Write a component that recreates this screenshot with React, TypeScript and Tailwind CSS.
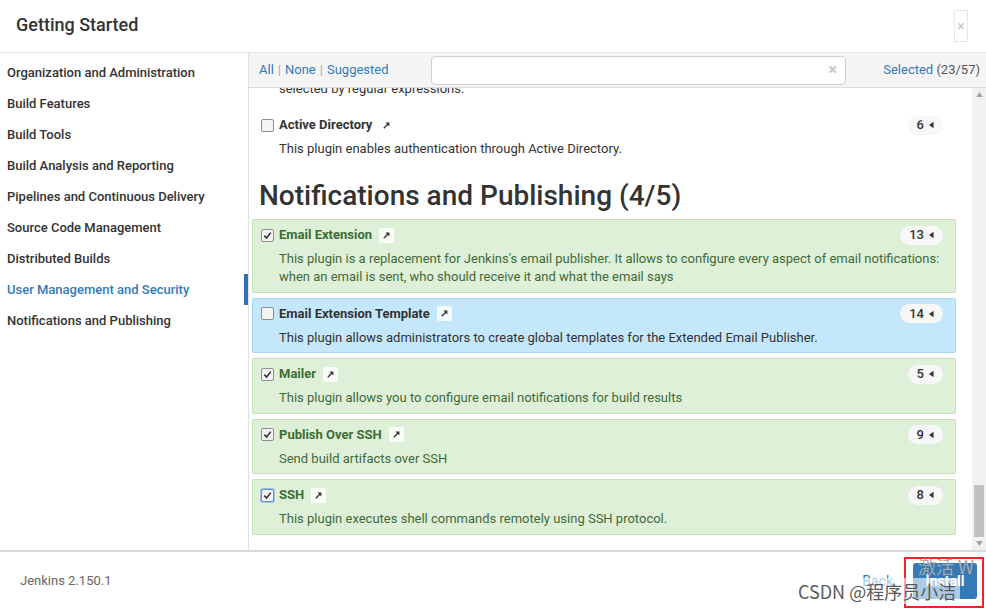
import React from 'react';

const categories = [
  'Organization and Administration',
  'Build Features',
  'Build Tools',
  'Build Analysis and Reporting',
  'Pipelines and Continuous Delivery',
  'Source Code Management',
  'Distributed Builds',
  'User Management and Security',
  'Notifications and Publishing',
];

type Plugin = { name: string; desc: string[]; deps: number; checked: boolean; tone: 'green' | 'blue' | 'none'; focus?: boolean };

const plugins: Plugin[] = [
  {
    name: 'Email Extension',
    desc: [
      "This plugin is a replacement for Jenkins's email publisher. It allows to configure every aspect of email notifications:",
      'when an email is sent, who should receive it and what the email says',
    ],
    deps: 13,
    checked: true,
    tone: 'green',
  },
  { name: 'Email Extension Template', desc: ['This plugin allows administrators to create global templates for the Extended Email Publisher.'], deps: 14, checked: false, tone: 'blue' },
  { name: 'Mailer', desc: ['This plugin allows you to configure email notifications for build results'], deps: 5, checked: true, tone: 'green' },
  { name: 'Publish Over SSH', desc: ['Send build artifacts over SSH'], deps: 9, checked: true, tone: 'green' },
  { name: 'SSH', desc: ['This plugin executes shell commands remotely using SSH protocol.'], deps: 8, checked: true, tone: 'green', focus: true },
];

function Checkbox({ checked, focus }: { checked: boolean; focus?: boolean }) {
  return (
    <span
      className={
        'w-[13px] h-[13px] rounded-[2px] border bg-[#f3f3f3] flex items-center justify-center shrink-0 ' +
        (focus ? 'border-[#5b8fd6] ring-1 ring-[#9fc0ec]' : 'border-[#8f8f8f]')
      }
    >
      {checked && (
        <svg viewBox="0 0 10 10" className="w-[9px] h-[9px]">
          <path d="M1.5 5.2 L4 7.8 L8.6 1.8" fill="none" stroke="#333" strokeWidth="1.8" />
        </svg>
      )}
    </span>
  );
}

function LinkIcon() {
  return (
    <span className="w-[15px] h-[15px] bg-white/80 rounded-[2px] flex items-center justify-center shrink-0">
      <svg viewBox="0 0 10 10" className="w-[9px] h-[9px]">
        <path d="M2 8 L7.5 2.5" stroke="#333" strokeWidth="1.5" />
        <path d="M3.8 1.8 H8.2 V6.2 Z" fill="#333" />
      </svg>
    </span>
  );
}

function DepBadge({ n }: { n: number }) {
  return (
    <span className="h-[19px] px-[9px] rounded-full bg-[#f7f7f7] flex items-center gap-[5px] text-[13px] text-[#333] font-medium">
      {n}
      <svg viewBox="0 0 6 8" className="w-[5px] h-[8px]">
        <path d="M5.5 0 V8 L0 4 Z" fill="#333" />
      </svg>
    </span>
  );
}

function PluginRow({ p }: { p: Plugin }) {
  const box =
    p.tone === 'green'
      ? 'bg-[#dff0d8] border-[#c5e2b6]'
      : p.tone === 'blue'
      ? 'bg-[#c4e7fb] border-[#a6d8f4]'
      : 'border-transparent';
  const title = p.tone === 'green' ? 'text-[#3b6e33]' : 'text-[#333]';
  const body = p.tone === 'green' ? 'text-[#3f6b3a]' : 'text-[#333]';
  return (
    <div className={'border rounded-[2px] pt-[6px] pb-[5.5px] pl-[8px] pr-[12px] ' + box}>
      <div className="h-[18px] flex items-center">
        <Checkbox checked={p.checked} focus={p.focus} />
        <span className={'ml-[5px] text-[13px] font-bold ' + title}>{p.name}</span>
        <span className="ml-[7px]">
          <LinkIcon />
        </span>
        <span className="ml-auto">
          <DepBadge n={p.deps} />
        </span>
      </div>
      <div className={'mt-[6px] pl-[18px] text-[13px] leading-[18px] ' + body}>
        {p.desc.map(d => (
          <div key={d}>{d}</div>
        ))}
      </div>
    </div>
  );
}

export default function App() {
  return (
    <div className="w-[986px] h-[610px] bg-white flex flex-col overflow-hidden relative font-['Roboto','Liberation_Sans',sans-serif] text-[#333]">
      {/* header */}
      <div className="h-[53px] shrink-0 border-b border-[#e3e3e3] flex items-center justify-between pl-[16px] pr-[18px] pb-[4px]">
        <h1 className="text-[18px] font-medium text-[#333]">Getting Started</h1>
        <button className="w-[14px] h-[32px] mt-[4px] border border-[#e6e6e6] text-[#c4c4c4] text-[14px] flex items-center justify-center">×</button>
      </div>

      <div className="flex flex-1 min-h-0">
        {/* sidebar */}
        <div className="w-[249px] shrink-0 border-r border-[#e0e0e0] pt-[4px]">
          {categories.map(c => {
            const active = c === 'User Management and Security';
            return (
              <div
                key={c}
                className={
                  'h-[31px] flex items-center pl-[7px] text-[13px] font-medium border-r-4 ' +
                  (active ? 'text-[#337ab7] border-[#2f73b3]' : 'text-[#333] border-transparent')
                }
              >
                {c}
              </div>
            );
          })}
        </div>

        {/* main */}
        <div className="flex-1 flex flex-col min-w-0">
          <div className="h-[35px] shrink-0 bg-[#f5f5f5] border-b border-[#dcdcdc] flex items-center pl-[10px] pr-[6px] text-[13px]">
            <div className="w-[172px] flex items-center gap-[4px] text-[#337ab7]">
              <span>All</span>
              <span className="text-[#aaa]">|</span>
              <span>None</span>
              <span className="text-[#aaa]">|</span>
              <span>Suggested</span>
            </div>
            <div className="w-[415px] h-[29px] bg-white border border-[#d0d0d0] rounded-[4px] flex items-center justify-end pr-[8px]">
              <span className="text-[#c8c8c8] text-[16px] font-bold">×</span>
            </div>
            <div className="ml-auto text-[#337ab7]">
              Selected <span className="text-[#555]">(23/57)</span>
            </div>
          </div>

          <div className="flex-1 flex min-h-0">
            <div className="flex-1 overflow-hidden pl-[3px] pr-[16px]">
              <div className="-mt-[8px] flex flex-col gap-[5px]">
                <div className="pl-[27px] pb-[6px] text-[13px] leading-[18px] text-[#333]">selected by regular expressions.</div>
                <PluginRow p={{ name: 'Active Directory', desc: ['This plugin enables authentication through Active Directory.'], deps: 6, checked: false, tone: 'none' }} />
                <h2 className="pl-[7px] mt-[9px] mb-[1.5px] text-[28px] leading-[34px] font-medium text-[#333]">Notifications and Publishing (4/5)</h2>
                {plugins.map(p => (
                  <PluginRow key={p.name} p={p} />
                ))}
              </div>
            </div>
            {/* scrollbar */}
            <div className="w-[14px] shrink-0 bg-[#f1f1f1] flex flex-col items-center">
              <svg viewBox="0 0 8 6" className="w-[7px] h-[5px] mt-[4px]">
                <path d="M0 6 L4 0 L8 6 Z" fill="#a3a3a3" />
              </svg>
              <div className="flex-1" />
              <div className="w-[10px] h-[52px] bg-[#c1c1c1]" />
              <svg viewBox="0 0 8 6" className="w-[7px] h-[5px] my-[4px]">
                <path d="M0 0 L4 6 L8 0 Z" fill="#a3a3a3" />
              </svg>
            </div>
          </div>
        </div>
      </div>

      {/* footer */}
      <div className="h-[60px] shrink-0 border-t-2 border-[#d9d9d9] flex items-center pl-[20px] pr-[9px]">
        <span className="text-[13px] text-[#666]">Jenkins 2.150.1</span>
        <span className="ml-auto text-[14px] text-[#337ab7]">Back</span>
        <button className="ml-[20px] w-[64px] h-[36px] rounded-[3px] bg-[#337ab7] text-white text-[14px] font-bold">Install</button>
      </div>

      {/* overlays from the screenshot */}
      <div className="absolute left-[904px] top-[557px] w-[80px] h-[51px] border-2 border-[#f02424]" />
      <div className="absolute left-[918px] top-[553px] text-[18px] text-[#a9a9a9] font-['Noto_Sans_CJK_SC',sans-serif]">激活 W</div>
      <div className="absolute left-[794px] top-[578px] px-[4px] h-[26px] flex items-center bg-white/60 text-[18px] text-[#5a5a5a] font-['Noto_Sans_CJK_SC',sans-serif]">
        CSDN @程序员小洁
      </div>
    </div>
  );
}
